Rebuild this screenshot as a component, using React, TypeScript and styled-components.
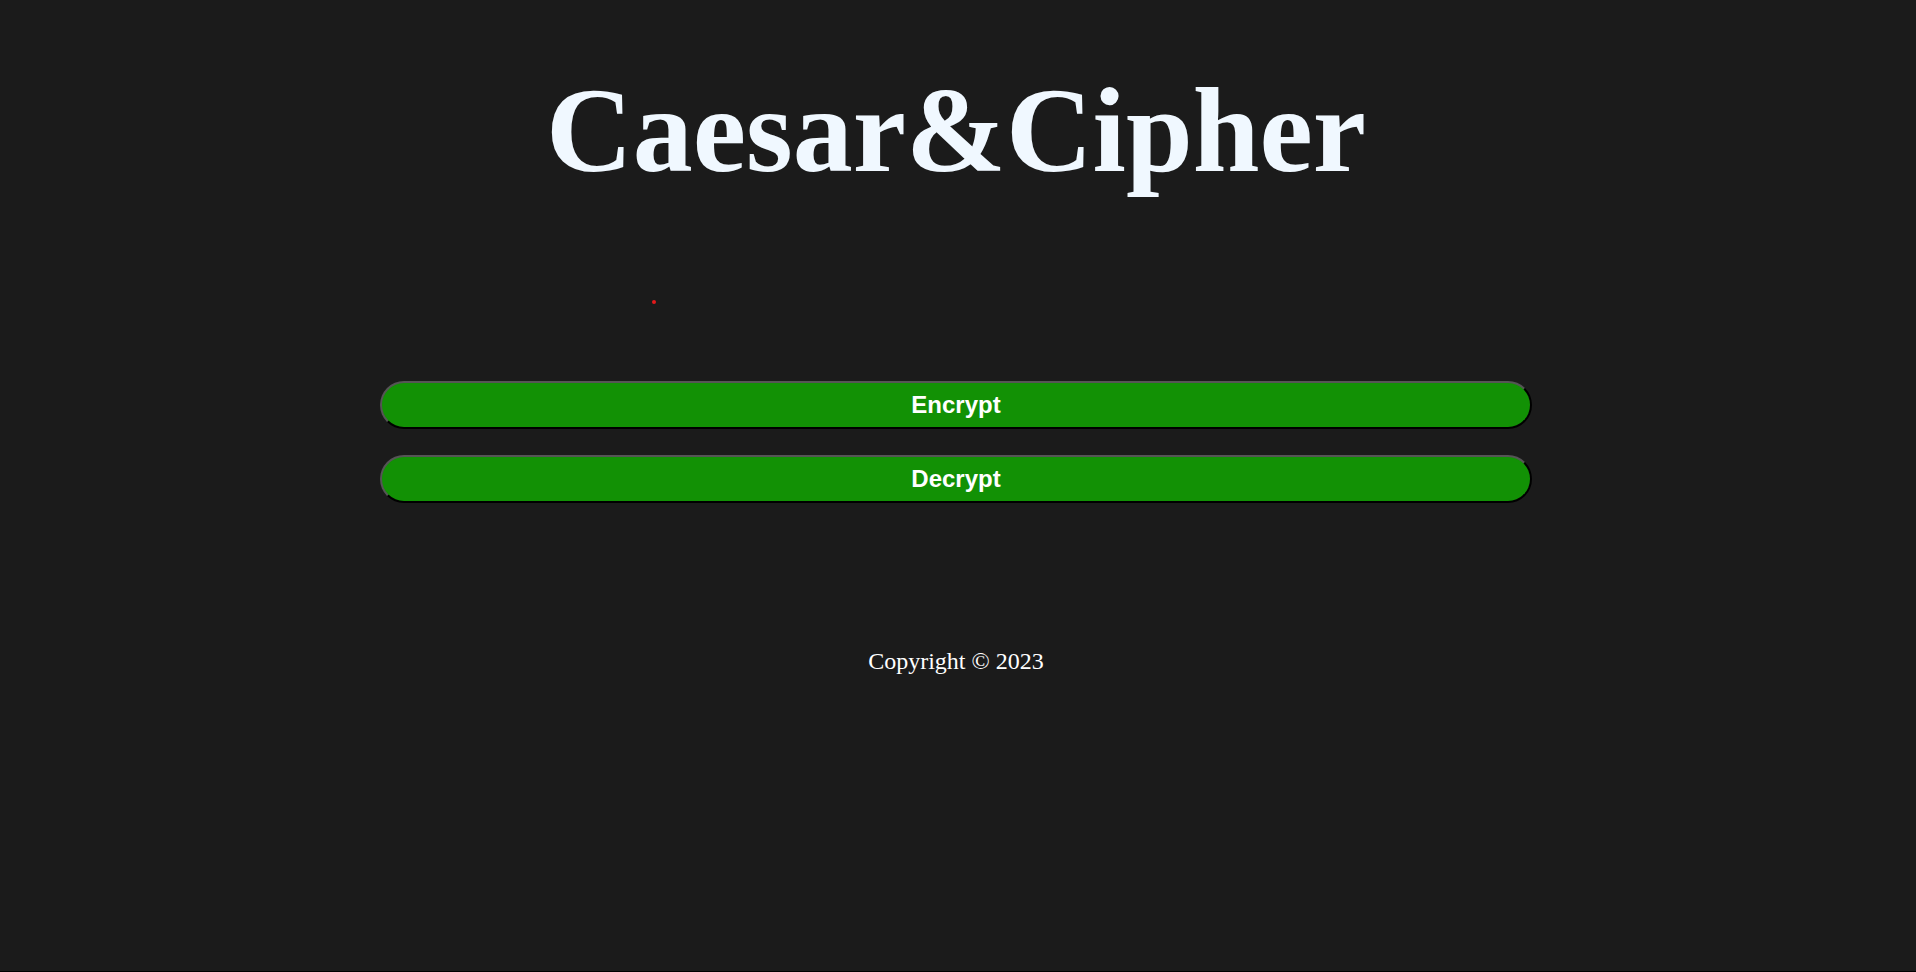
import styled, { createGlobalStyle } from "styled-components";

const GlobalStyle = createGlobalStyle`
  html {
    background: #000;
  }
  body {
    margin: 0;
    background: #000;
  }
`;

const App = () => {
  return (
    <>
      <GlobalStyle />
      <Page>
        <Title>Caesar&amp;Cipher</Title>
        <StatusRow>
          <StatusDot />
        </StatusRow>
        <Actions>
          <ActionButton type="button">Encrypt</ActionButton>
          <ActionButton type="button">Decrypt</ActionButton>
        </Actions>
        <Footer>Copyright © 2023</Footer>
      </Page>
    </>
  );
};

export default App;

const Page = styled.main`
  min-height: calc(100vh - 1px);
  box-sizing: border-box;
  background-color: #1b1b1b;
  padding: 71px 4px 0 0;
  display: flex;
  flex-direction: column;
  align-items: center;
`;

const Title = styled.h1`
  margin: 0;
  font-family: "Liberation Serif", "Times New Roman", serif;
  font-weight: 700;
  font-size: 120px;
  line-height: 1;
  color: #f0f8ff;
`;

const StatusRow = styled.div`
  width: 1152px;
  margin-top: 109px;
  height: 4px;
  display: flex;
  padding-left: 272px;
  box-sizing: border-box;
`;

const StatusDot = styled.span`
  width: 4px;
  height: 4px;
  border-radius: 50%;
  background-color: #e3191b;
`;

const Actions = styled.div`
  width: 1152px;
  margin-top: 77px;
  display: flex;
  flex-direction: column;
  gap: 26px;
`;

const ActionButton = styled.button`
  width: 100%;
  height: 48px;
  box-sizing: border-box;
  border: 2px solid;
  border-color: #555 #000 #000 #555;
  border-radius: 24px;
  background-color: #129105;
  color: #fff;
  font-family: "Liberation Sans", Arial, sans-serif;
  font-weight: 700;
  font-size: 24px;
  cursor: pointer;
`;

const Footer = styled.footer`
  margin-top: 144px;
  font-family: "Liberation Serif", "Times New Roman", serif;
  font-size: 24px;
  line-height: 28px;
  color: #fff;
`;
